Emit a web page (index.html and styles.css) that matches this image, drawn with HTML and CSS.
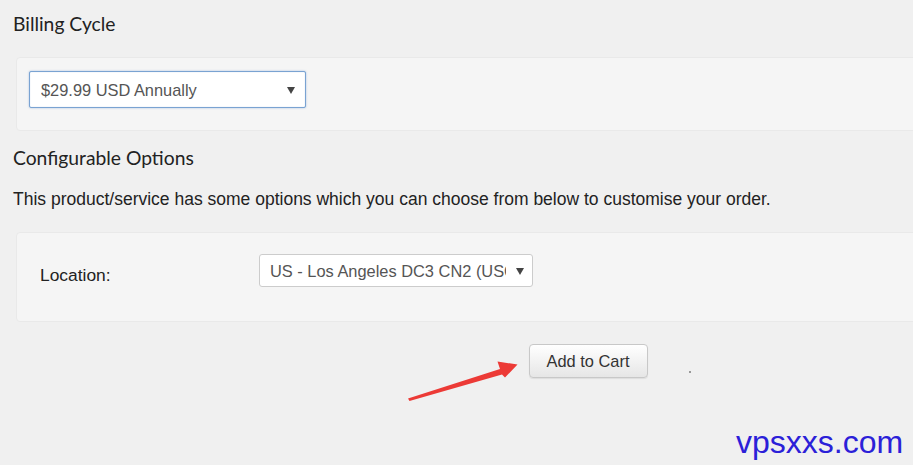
FILE: index.html
```html
<!DOCTYPE html>
<html lang="en">
<head>
    <meta charset="UTF-8">
    <meta name="viewport" content="width=device-width, initial-scale=1.0">
    <title>Configure</title>
    <link rel="stylesheet" href="styles.css">
</head>
<body>

    <main class="product-config">
        <h2 class="section-title">Billing Cycle</h2>
        <div class="field-panel billing-panel">
            <div class="select-wrap select-focus">
                <select class="select-box" name="billingcycle">
                    <option>$29.99 USD Annually</option>
                </select>
            </div>
        </div>

        <h2 class="section-title options-title">Configurable Options</h2>
        <p class="intro">This product/service has some options which you can choose from below to customise your order.</p>

        <div class="field-panel options-panel">
            <div class="option-row">
                <label class="option-label" for="location">Location:</label>
                <div class="select-wrap select-small">
                    <select class="select-box" id="location" name="location">
                        <option>US - Los Angeles DC3 CN2 (USC)</option>
                    </select>
                </div>
            </div>
        </div>

        <div class="form-actions">
            <button type="button" class="btn-cart">Add to Cart</button>
            <span class="loader-dot"></span>
        </div>
    </main>

    <!-- annotation arrow over the screenshot -->
    <svg class="hint-arrow" width="913" height="465" viewBox="0 0 913 465">
        <polygon points="408,398.5 500,369 497.5,361.5 517.5,364.5 505,377.5 502,374.5 409.5,401" fill="#ec3a36"/>
    </svg>

    <div class="watermark">vpsxxs.com</div>

</body>
</html>
```

FILE: styles.css
```css
/* Global Styles */
html, body {
    margin: 0;
    padding: 0;
    overflow: hidden;
}

body {
    font-family: 'Liberation Sans', Arial, sans-serif;
    font-size: 16.4px;
    background-color: #f0f0f0;
    color: #333;
    width: 913px;
    height: 465px;
    position: relative;
}

/* Layout */
.product-config {
    width: 1150px;
    padding: 10px 13px 0 13px;
}

.section-title {
    font-family: Lato, 'Open Sans', sans-serif;
    font-weight: 400;
    font-size: 19.3px;
    line-height: 28px;
    margin: 0;
    color: #222;
}

.options-title {
    margin-top: 13px;
}

.intro {
    margin: 17px 0 0;
    font-size: 17.5px;
    line-height: 21px;
    color: #222;
}

/* Panels */
.field-panel {
    background-color: #f5f5f5;
    border: 1px solid #e9e9e9;
    border-radius: 4px;
    margin-left: 3px;
}

.billing-panel {
    margin-top: 19px;
    padding: 13px 12px 22px;
}

.options-panel {
    margin-top: 22px;
    padding: 21px 23px 34px;
}

.option-row {
    display: flex;
    align-items: flex-start;
}

.option-label {
    width: 219px;
    margin-top: 10px;
    font-size: 17.4px;
    line-height: 22px;
    color: #222;
}

/* Selects */
.select-wrap {
    position: relative;
    display: inline-block;
}

.select-wrap::after {
    content: "";
    position: absolute;
    top: 50%;
    right: 9px;
    margin-top: -3px;
    border-left: 4px solid transparent;
    border-right: 4px solid transparent;
    border-top: 7px solid #444;
    pointer-events: none;
}

.select-box {
    appearance: none;
    -webkit-appearance: none;
    font-family: 'Liberation Sans', Arial, sans-serif;
    font-size: 16.4px;
    color: #555;
    background-color: white;
    border: 1px solid #ccc;
    border-radius: 3px;
    margin: 0;
    outline: none;
}

.select-focus .select-box {
    width: 277px;
    height: 37px;
    padding: 0 30px 0 11px;
    border: 1px solid #7aa3d2;
    border-radius: 2px;
    box-shadow: 0 0 2px rgba(102, 150, 210, 0.6), inset 0 0 1px rgba(102, 150, 210, 0.5);
}

.select-focus::after {
    right: 11px;
}

.select-small .select-box {
    width: 274px;
    height: 33px;
    padding: 0 26px 0 10px;
}

/* Button */
.form-actions {
    position: relative;
    margin-top: 22px;
    text-align: center;
}

.btn-cart {
    font-family: 'Liberation Sans', Arial, sans-serif;
    font-size: 16.4px;
    color: #333;
    height: 34px;
    width: 119px;
    padding: 0;
    border: 1px solid #c8c8c8;
    border-radius: 4px;
    background: linear-gradient(#ffffff, #e6e6e6);
    box-shadow: 0 1px 1px rgba(0, 0, 0, 0.08);
    cursor: pointer;
}

.loader-dot {
    position: absolute;
    left: 676px;
    top: 27px;
    width: 2px;
    height: 2px;
    background-color: #999;
}

/* Overlays */
.hint-arrow {
    position: absolute;
    left: 0;
    top: 0;
    pointer-events: none;
}

.watermark {
    position: absolute;
    left: 736px;
    top: 422px;
    font-family: 'Liberation Sans', Arial, sans-serif;
    font-size: 32px;
    line-height: 40px;
    color: #2b20d8;
}
```
